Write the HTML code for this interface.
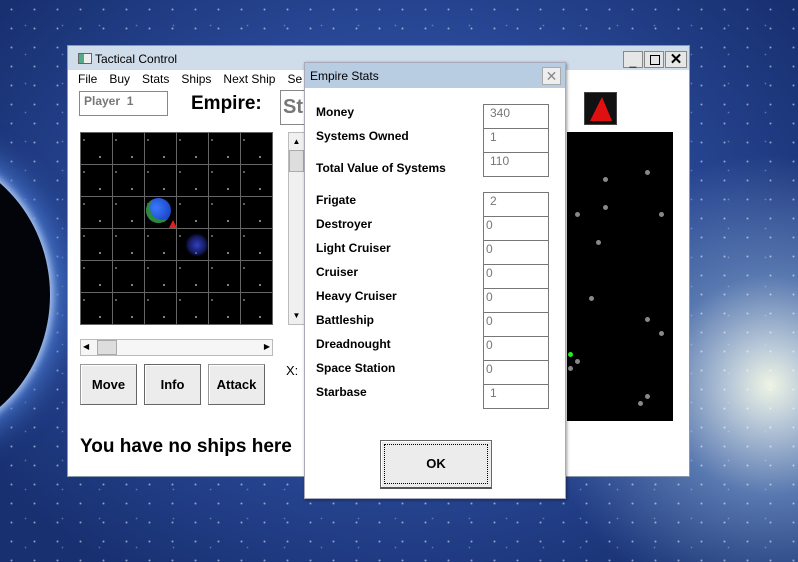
<!DOCTYPE html>
<html><head><style>
*{margin:0;padding:0;box-sizing:border-box}
body{width:798px;height:562px;overflow:hidden;position:relative;font-family:"Liberation Sans",sans-serif;
background:
radial-gradient(circle,rgba(255,255,255,.7) 0,rgba(255,255,255,0) 1.5px) 0 0/23px 19px,
radial-gradient(circle,rgba(220,235,255,.5) 0,rgba(255,255,255,0) 1.2px) 7px 11px/37px 29px,
radial-gradient(circle at 770px 385px,#eef4e4 0,#b8c8d8 40px,#5878b0 110px,rgba(40,70,140,0) 230px),
radial-gradient(ellipse at 400px 250px,#3a5ab0 0,#2a4a9a 250px,#183070 500px);}
.planet{position:absolute;left:-225px;top:150px;width:275px;height:290px;border-radius:50%;background:#02040a;box-shadow:0 0 8px 3px #b0c8f0,0 0 30px 12px #4a7ad0;}
.win{position:absolute;left:67px;top:45px;width:623px;height:432px;background:#fff;border:1px solid #8a99aa;}
.tb{height:24px;background:#cfdcea;font-size:12px;padding:6px 0 0 27px;color:#000}
.menu{position:absolute;top:26px;left:10px;font-size:12px}
.menu span{margin-right:12px}
.abs{position:absolute}
.btn{position:absolute;background:#ececec;border:1px solid #999;border-right-color:#666;border-bottom-color:#666;box-shadow:inset 1px 1px #fff;font-weight:bold;font-size:13px;text-align:center}
.dlg{position:absolute;left:304px;top:62px;width:262px;height:437px;background:#fff;border:1px solid #aab;box-shadow:1px 1px 3px rgba(0,0,0,.4)}
.dtb{height:25px;background:#b8cce2;font-size:12px;padding:6px 0 0 5px}
.lbl{position:absolute;left:11px;font-size:12px;font-weight:bold}
.fld{position:absolute;left:178px;width:66px;height:25px;border:1px solid #777;font-size:12px;color:#777;padding:1px 0 0 6px}
.dot{position:absolute;width:5px;height:5px;border-radius:50%;background:#888}
.grid{background:
radial-gradient(circle,#fff 0,#fff .6px,transparent 1px) 4px 9px/32px 32px,
radial-gradient(circle,#ccc 0,#ccc .5px,transparent 1px) 20px 24px/32px 32px,
linear-gradient(90deg,#666 1px,transparent 1px) 0 0/32px 32px,
linear-gradient(#666 1px,transparent 1px) 0 0/32px 32px,#000}
</style></head><body>
<div class="planet"></div>
<div class="win">
 <div class="tb"><span class="abs" style="left:10px;top:7px;width:14px;height:11px;border:1px solid #666;background:linear-gradient(90deg,#5a8 0,#5a8 40%,#eee 40%)"></span>Tactical Control</div>
 <div class="abs" style="left:555px;top:5px;width:20px;height:17px;background:#e6e6e6;border:1px solid #888;font-size:12px;text-align:center;line-height:18px">_</div>
 <div class="abs" style="left:576px;top:5px;width:20px;height:17px;background:#e6e6e6;border:1px solid #888"><div class="abs" style="left:5px;top:3px;width:10px;height:10px;border:1.5px solid #000"></div></div>
 <div class="abs" style="left:597px;top:5px;width:22px;height:17px;background:#e6e6e6;border:1px solid #888;font-size:15px;text-align:center;line-height:16px;font-weight:bold">✕</div>
 <div class="menu"><span>File</span><span>Buy</span><span>Stats</span><span>Ships</span><span>Next Ship</span><span>Se</span></div>
 <div class="abs" style="left:11px;top:45px;width:89px;height:25px;border:1px solid #888;font-size:12px;color:#777;font-weight:bold;padding:2px 4px">Player&nbsp; 1</div>
 <div class="abs" style="left:123px;top:47px;font-size:19px;font-weight:bold">Empire:</div>
 <div class="abs" style="left:212px;top:44px;width:60px;height:35px;border:1px solid #888;font-size:20px;color:#777;font-weight:bold;padding:5px 0 0 2px;overflow:hidden">Str</div>
 <div class="abs grid" style="left:12px;top:86px;width:193px;height:193px"></div>
 <div class="abs" style="left:78px;top:152px;width:25px;height:25px;border-radius:50%;background:radial-gradient(circle at 40% 40%,#3a7aff,#1030b0);box-shadow:inset 4px -3px #2a8a3a"></div>
 <div class="abs" style="left:101px;top:174px;width:0;height:0;border-left:4px solid transparent;border-right:4px solid transparent;border-bottom:8px solid #e02020"></div>
 <div class="abs" style="left:117px;top:187px;width:24px;height:24px;border-radius:50%;background:radial-gradient(#3040c0 0,rgba(40,50,180,.5) 50%,transparent 70%)"></div>
 <div class="abs" style="left:220px;top:86px;width:17px;height:193px;background:#f0f0f0;border:1px solid #bbb"><div style="height:17px;font-size:8px;text-align:center;line-height:17px">▲</div><div style="height:22px;background:#ddd;border:1px solid #aaa"></div><div class="abs" style="bottom:0;width:15px;height:17px;font-size:8px;text-align:center;line-height:17px">▼</div></div>
 <div class="abs" style="left:12px;top:293px;width:193px;height:17px;background:#f6f6f6;border:1px solid #bbb"><span class="abs" style="left:2px;top:2px;font-size:8px">◀</span><div class="abs" style="left:16px;top:0;width:20px;height:15px;background:#ddd;border:1px solid #aaa"></div><span class="abs" style="right:2px;top:2px;font-size:8px">▶</span></div>
 <div class="btn" style="left:12px;top:318px;width:57px;height:41px;line-height:39px">Move</div>
 <div class="btn" style="left:76px;top:318px;width:57px;height:41px;line-height:39px;border-color:#666">Info</div>
 <div class="btn" style="left:140px;top:318px;width:57px;height:41px;line-height:39px">Attack</div>
 <div class="abs" style="left:218px;top:317px;font-size:13px">X:</div>
 <div class="abs" style="left:12px;top:390px;font-size:19px;font-weight:bold">You have no ships here</div>
 <div class="abs" style="left:516px;top:46px;width:33px;height:33px;background:#111;border:1px solid #444"><div class="abs" style="left:5px;top:4px;width:0;height:0;border-left:12px solid transparent;border-right:10px solid transparent;border-bottom:24px solid #e01010"></div></div>
 <div class="abs" style="left:499px;top:86px;width:106px;height:289px;background:#000"></div>
</div>
<div class="dot" style="left:645px;top:170px"></div><div class="dot" style="left:603px;top:177px"></div><div class="dot" style="left:603px;top:205px"></div><div class="dot" style="left:575px;top:212px"></div><div class="dot" style="left:659px;top:212px"></div><div class="dot" style="left:596px;top:240px"></div><div class="dot" style="left:589px;top:296px"></div><div class="dot" style="left:645px;top:317px"></div><div class="dot" style="left:659px;top:331px"></div><div class="dot" style="left:568px;top:352px;background:#2e2"></div><div class="dot" style="left:575px;top:359px"></div><div class="dot" style="left:568px;top:366px"></div><div class="dot" style="left:645px;top:394px"></div><div class="dot" style="left:638px;top:401px"></div>
<div class="dlg">
 <div class="dtb">Empire Stats</div>
 <div class="abs" style="left:237px;top:4px;width:19px;height:18px;border:1px solid #aaa;background:#eee;color:#888;text-align:center;font-size:14px;line-height:17px">✕</div>
 <div class="lbl" style="top:42px">Money</div><div class="fld" style="top:41px">340</div>
 <div class="lbl" style="top:66px">Systems Owned</div><div class="fld" style="top:65px">1</div>
 <div class="lbl" style="top:98px">Total Value of Systems</div><div class="fld" style="top:89px">110</div>
 <div class="lbl" style="top:130px">Frigate</div><div class="fld" style="top:129px">2</div>
 <div class="lbl" style="top:154px">Destroyer</div><div class="fld" style="top:153px;padding-left:2px">0</div>
 <div class="lbl" style="top:178px">Light Cruiser</div><div class="fld" style="top:177px;padding-left:2px">0</div>
 <div class="lbl" style="top:202px">Cruiser</div><div class="fld" style="top:201px;padding-left:2px">0</div>
 <div class="lbl" style="top:226px">Heavy Cruiser</div><div class="fld" style="top:225px;padding-left:2px">0</div>
 <div class="lbl" style="top:250px">Battleship</div><div class="fld" style="top:249px;padding-left:2px">0</div>
 <div class="lbl" style="top:274px">Dreadnought</div><div class="fld" style="top:273px;padding-left:2px">0</div>
 <div class="lbl" style="top:298px">Space Station</div><div class="fld" style="top:297px;padding-left:2px">0</div>
 <div class="lbl" style="top:322px">Starbase</div><div class="fld" style="top:321px">1</div>
 <div class="btn" style="left:75px;top:377px;width:112px;height:49px;line-height:45px;border:1px solid #666;border-bottom:2px solid #555"><div style="position:absolute;inset:3px;border:1px dotted #000"></div>OK</div>
</div>
</body></html>
